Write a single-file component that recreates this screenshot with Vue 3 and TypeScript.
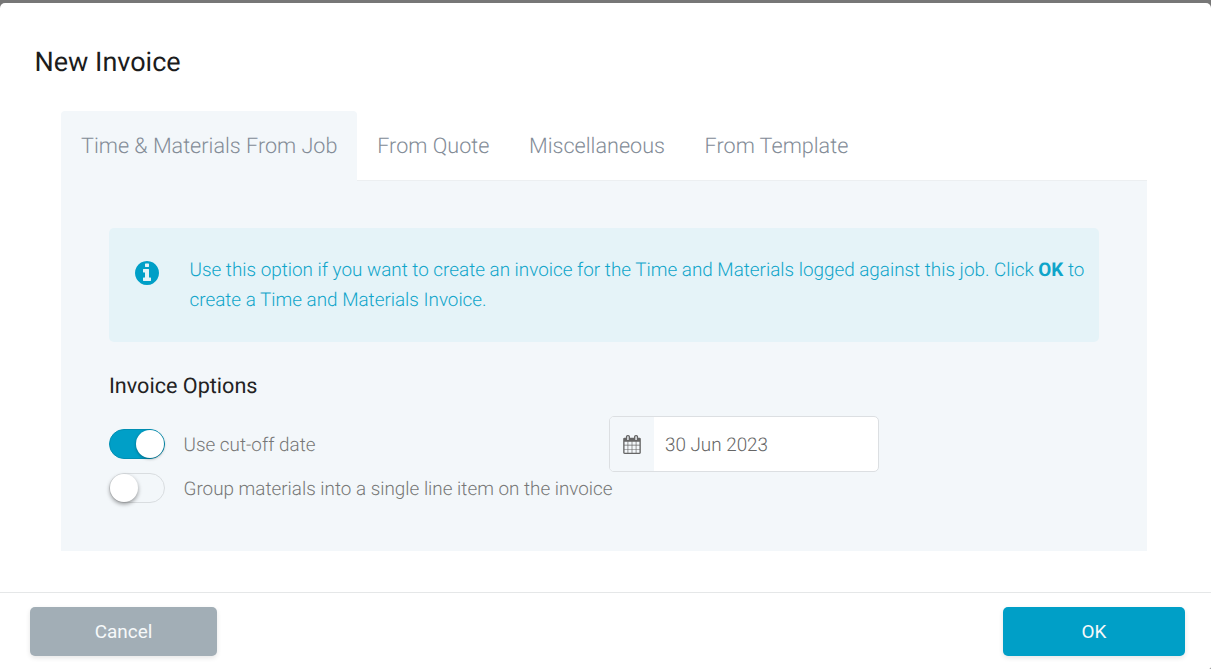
<script setup lang="ts">
const tabs: string[] = ['Time & Materials From Job', 'From Quote', 'Miscellaneous', 'From Template']
const activeTab = 0
</script>

<template>
  <div class="backdrop">
    <div class="modal">
      <header class="modal-header">New Invoice</header>
      <main class="modal-body">
        <nav class="tabs">
          <div v-for="(t, i) in tabs" :key="t" class="tab" :class="{ active: i === activeTab }">{{ t }}</div>
        </nav>
        <section class="panel">
          <div class="alert">
            <svg class="info" viewBox="0 128 1536 1536" aria-hidden="true">
              <path fill="#009fc7" d="M1024 1376v-160q0-14-9-23t-23-9h-96v-512q0-14-9-23t-23-9h-320q-14 0-23 9t-9 23v160q0 14 9 23t23 9h96v320h-96q-14 0-23 9t-9 23v160q0 14 9 23t23 9h448q14 0 23-9t9-23zm-128-896v-160q0-14-9-23t-23-9h-192q-14 0-23 9t-9 23v160q0 14 9 23t23 9h192q14 0 23-9t9-23zm640 416q0 209-103 385.5t-279.5 279.5-385.5 103-385.5-103-279.5-279.5-103-385.5 103-385.5 279.5-279.5 385.5-103 385.5 103 279.5 279.5 103 385.5z" />
            </svg>
            <p>Use this option if you want to create an invoice for the Time and Materials logged against this job. Click <b>OK</b> to create a Time and Materials Invoice.</p>
          </div>
          <h3 class="options-title">Invoice Options</h3>
          <div class="options">
            <div class="option-row first">
              <span class="switch on"><i></i></span>
              <span class="label">Use cut-off date</span>
              <div class="date">
                <span class="addon">
                  <svg width="18" height="19" viewBox="64 0 1664 1792" aria-hidden="true">
                    <path fill="#666" d="M192 1664h288v-288h-288v288zm352 0h320v-288h-320v288zm-352-352h288v-320h-288v320zm352 0h320v-320h-320v320zm-352-384h288v-288h-288v288zm736 736h320v-288h-320v288zm-384-736h320v-288h-320v288zm768 736h288v-288h-288v288zm-384-352h320v-320h-320v320zm-352-864v-288q0-13-9.5-22.5t-22.5-9.5h-64q-13 0-22.5 9.5t-9.5 22.5v288q0 13 9.5 22.5t22.5 9.5h64q13 0 22.5-9.5t9.5-22.5zm736 864h288v-320h-288v320zm-384-384h320v-288h-320v288zm384 0h288v-288h-288v288zm32-480v-288q0-13-9.5-22.5t-22.5-9.5h-64q-13 0-22.5 9.5t-9.5 22.5v288q0 13 9.5 22.5t22.5 9.5h64q13 0 22.5-9.5t9.5-22.5zm384-64v1280q0 52-38 90t-90 38h-1408q-52 0-90-38t-38-90v-1280q0-52 38-90t90-38h128v-96q0-66 47-113t113-47h64q66 0 113 47t47 113v96h384v-96q0-66 47-113t113-47h64q66 0 113 47t47 113v96h128q52 0 90 38t38 90z" />
                  </svg>
                </span>
                <span class="date-value">30 Jun 2023</span>
              </div>
            </div>
            <div class="option-row">
              <span class="switch"><i></i></span>
              <span class="label">Group materials into a single line item on the invoice</span>
            </div>
          </div>
        </section>
      </main>
      <footer class="modal-footer">
        <button class="btn cancel">Cancel</button>
        <button class="btn ok">OK</button>
      </footer>
    </div>
  </div>
</template>

<style>
html, body { margin: 0; background: #777; }
</style>

<style scoped>
.backdrop {
  height: 669px;
  padding-top: 3px;
  box-sizing: border-box;
  background: #777;
  font-family: Roboto, sans-serif;
  text-rendering: geometricPrecision;
  overflow: hidden;
}
.modal {
  height: 666px;
  background: #fff;
  border-radius: 5px 5px 2px 0;
  display: flex;
  flex-direction: column;
}
.modal-header {
  padding: 41px 34.5px 0;
  height: 67px;
  box-sizing: border-box;
  font-size: 27px;
  font-weight: 400;
  line-height: 36px;
  color: #1c1c1c;
}
.modal-body {
  flex: 1;
  margin: 41px 64px 0 61px;
}
.tabs {
  display: flex;
  height: 70px;
  box-sizing: border-box;
  border-bottom: 1px solid #eceff1;
}
.tab {
  padding: 0 19.8px;
  font-size: 21.6px;
  font-weight: 300;
  line-height: 71px;
  height: 70px;
  box-sizing: border-box;
  color: #838c97;
}
.tab.active {
  background: #f3f7fa;
  border-radius: 4px 4px 0 0;
  padding: 0 20px;
}
.panel {
  height: 370px;
  box-sizing: border-box;
  background: #f3f7fa;
  padding: 47px 48px 0;
}
.alert {
  height: 114px;
  box-sizing: border-box;
  background: #e5f3f8;
  border-radius: 5px;
  display: flex;
  padding: 27px 0 0 26px;
  gap: 30.5px;
  color: #0fa5ca;
}
.info {
  width: 24px;
  height: 24px;
  flex: none;
  margin-top: 6px;
}
.alert p {
  margin: 0;
  font-size: 18.88px;
  font-weight: 300;
  line-height: 30px;
}
.alert b { font-weight: 700; }
.options-title {
  margin: 29px 0 0;
  font-size: 21.6px;
  font-weight: 400;
  line-height: 31px;
  color: #222;
}
.options { margin-top: 15px; }
.option-row {
  display: flex;
  align-items: center;
  height: 30px;
}
.option-row.first { height: 56px; margin-bottom: 1px; margin-top: -1px; }
.switch {
  width: 56px;
  height: 30px;
  box-sizing: border-box;
  border-radius: 15px;
  border: 1px solid #d9dde0;
  background: transparent;
  position: relative;
  flex: none;
}
.switch i {
  position: absolute;
  left: 0;
  top: 0;
  width: 28px;
  height: 28px;
  border-radius: 50%;
  background: #fff;
  box-shadow: 0 2px 4px rgba(0, 0, 0, 0.4);
}
.switch.on {
  background: #009fc7;
  border-color: #008fb3;
}
.switch.on i { left: 26px; box-shadow: 0 1px 3px rgba(0, 0, 0, 0.35); }
.label {
  margin-left: 18.5px;
  font-size: 18.88px;
  font-weight: 300;
  color: #777;
  white-space: nowrap;
}
.date {
  position: relative;
  margin-left: 293.5px;
  width: 270px;
  height: 56px;
  box-sizing: border-box;
  border: 1px solid #dcdfe2;
  border-radius: 5px;
  background: #fff;
  display: flex;
  align-items: center;
  overflow: hidden;
}
.addon {
  width: 44px;
  height: 100%;
  background: #f3f7fa;
  display: flex;
  align-items: center;
  justify-content: center;
  flex: none;
}
.date-value {
  margin-left: 11px;
  font-size: 18.88px;
  font-weight: 300;
  color: #666;
}
.modal-footer {
  height: 77px;
  box-sizing: border-box;
  border-top: 1px solid #e5e7e8;
  display: flex;
  justify-content: space-between;
  padding: 14px 26px 0 30px;
}
.btn {
  height: 49px;
  border: 0;
  border-radius: 5px;
  color: #f6f9fa;
  font-family: Roboto, sans-serif;
  font-size: 18.9px;
  font-weight: 400;
  box-shadow: 0 2px 5px rgba(0, 0, 0, 0.1);
  padding: 0;
}
.cancel { width: 187px; background: #a2aeb6; }
.ok { width: 182px; background: #009fc7; }
</style>
